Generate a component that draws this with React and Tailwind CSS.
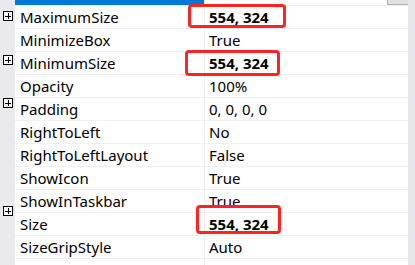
import React from "react"

const rows = [
  { name: "MaximumSize", value: "554, 324", expand: true, bold: true },
  { name: "MinimizeBox", value: "True" },
  { name: "MinimumSize", value: "554, 324", expand: true, bold: true },
  { name: "Opacity", value: "100%" },
  { name: "Padding", value: "0, 0, 0, 0", expand: true },
  { name: "RightToLeft", value: "No" },
  { name: "RightToLeftLayout", value: "False" },
  { name: "ShowIcon", value: "True" },
  { name: "ShowInTaskbar", value: "True" },
  { name: "Size", value: "554, 324", expand: true, bold: true },
  { name: "SizeGripStyle", value: "Auto" },
  { name: "StartPosition", value: "WindowsDefaultLocation" },
]

const PlusBox = () => (
  <svg width="10" height="10" viewBox="0 0 10 10" className="block">
    <rect x="0.5" y="0.5" width="9" height="9" fill="white" stroke="black" strokeWidth="1" />
    <path d="M2 5.5h6M5.5 2v6" stroke="black" strokeWidth="1" />
  </svg>
)

export default function App() {
  return (
    <div
      className="relative w-[415px] h-[265px] overflow-hidden bg-white flex text-[15px] text-black"
      style={{ fontFamily: '"Noto Sans", "Liberation Sans", sans-serif' }}
    >
      {/* left gutter */}
      <div className="w-[15px] bg-[#e9e9ee] flex flex-col">
        <div className="h-[6px]" />
        {rows.map((r) => (
          <div key={r.name} className="h-[23px] flex items-center pl-[3px]">
            {r.expand && <PlusBox />}
          </div>
        ))}
      </div>

      {/* grid */}
      <div className="flex-1 flex flex-col">
        <div className="h-[6px] flex border-b border-[#f0f0f0]">
          <div className="w-[189px] h-[5px] bg-[#0078d7]" />
          <div className="w-px h-[5px] bg-[#f0f0f0]" />
          <div className="flex-1 flex justify-end">
            <div className="w-[21px] h-[5px] bg-[#e1e1e1] border-l border-b border-[#adadad]" />
          </div>
        </div>
        {rows.map((r) => (
          <div key={r.name} className="h-[23px] shrink-0 flex border-b border-[#f0f0f0]">
            <div className="w-[189px] pl-[5px] flex items-center leading-none whitespace-nowrap">
              {r.name}
            </div>
            <div className="w-px bg-[#f0f0f0]" />
            <div
              className={`flex-1 pl-[4px] flex items-center leading-none whitespace-nowrap ${
                r.bold ? "font-bold" : ""
              }`}
            >
              {r.value}
            </div>
          </div>
        ))}
      </div>

      {/* scrollbar */}
      <div className="w-[7px] bg-[#e6e6eb]" />

      {/* red annotation boxes */}
      <div className="absolute left-[188px] top-[4px] w-[98px] h-[24px] border-[3px] border-[#ff2424] rounded-[4px]" />
      <div className="absolute left-[185px] top-[50px] w-[95px] h-[26px] border-[3px] border-[#ff2424] rounded-[4px]" />
      <div className="absolute left-[196px] top-[205px] w-[85px] h-[29px] border-[3px] border-[#ff2424] rounded-[4px]" />
    </div>
  )
}
